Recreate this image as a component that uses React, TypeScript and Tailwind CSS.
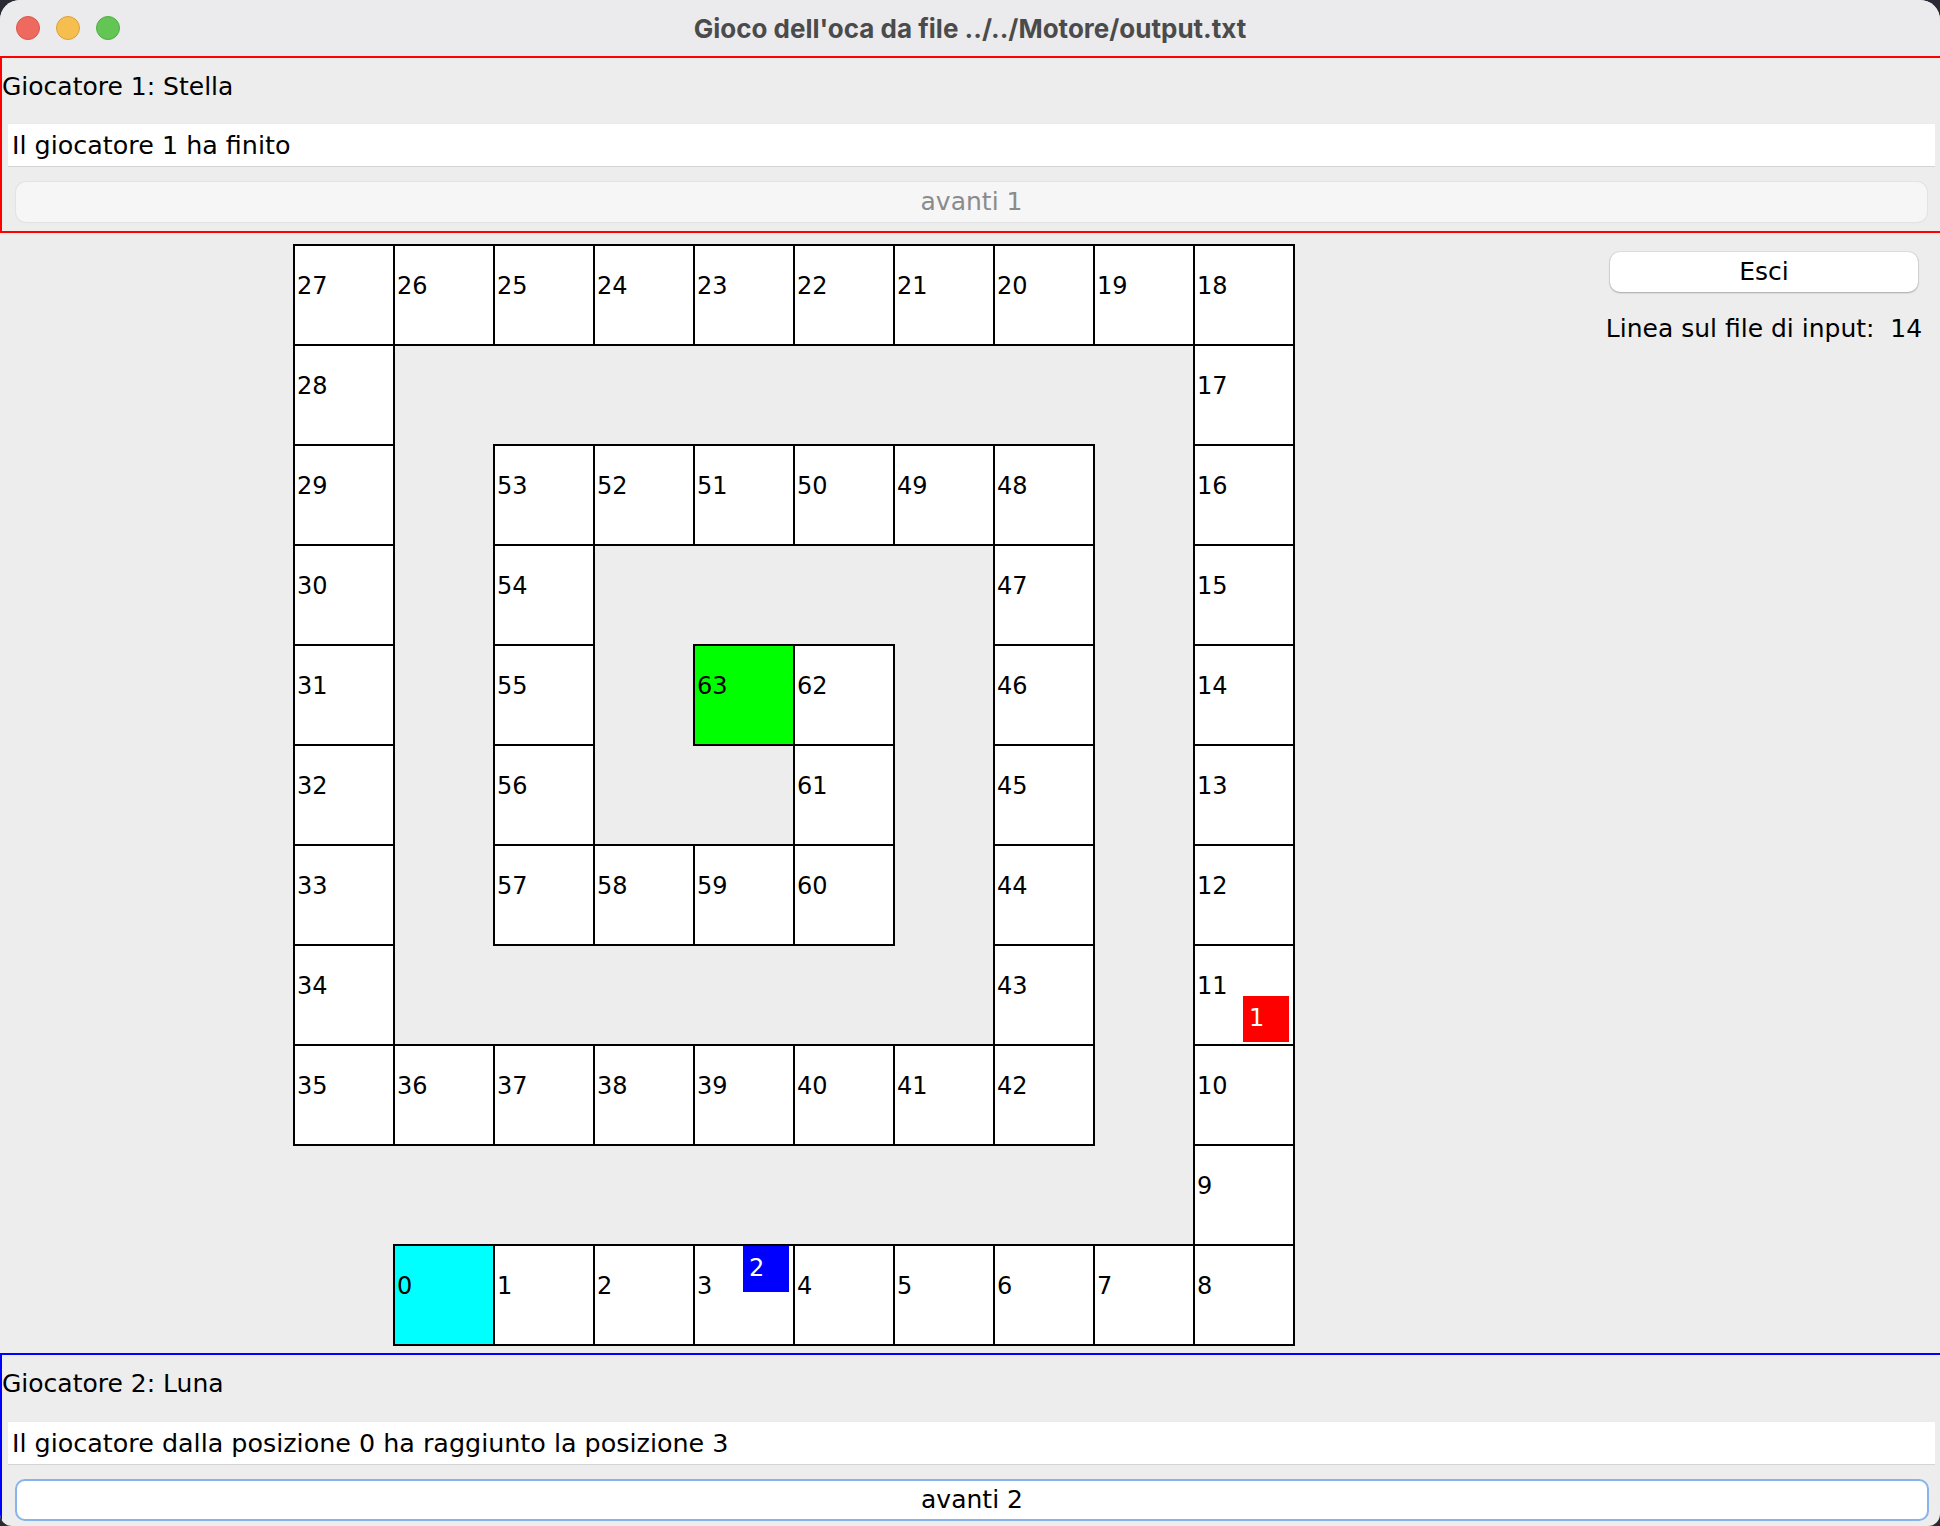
import React from 'react';

type Cell = number | null;
const _ = null;

// tabellone a spirale, 11 righe x 10 colonne
const board: Cell[][] = [
    [27, 26, 25, 24, 23, 22, 21, 20, 19, 18],
    [28, _, _, _, _, _, _, _, _, 17],
    [29, _, 53, 52, 51, 50, 49, 48, _, 16],
    [30, _, 54, _, _, _, _, 47, _, 15],
    [31, _, 55, _, 63, 62, _, 46, _, 14],
    [32, _, 56, _, _, 61, _, 45, _, 13],
    [33, _, 57, 58, 59, 60, _, 44, _, 12],
    [34, _, _, _, _, _, _, 43, _, 11],
    [35, 36, 37, 38, 39, 40, 41, 42, _, 10],
    [_, _, _, _, _, _, _, _, _, 9],
    [_, 0, 1, 2, 3, 4, 5, 6, 7, 8],
];

const sans = "font-['DejaVu_Sans',sans-serif]";

const Token: React.FC<{ n: number; color: string; pos: string }> = ({ n, color, pos }) => (
    <div className={`absolute w-[46px] h-[46px] ${pos} ${color} text-white text-[24px] leading-none pt-[10px] pl-[6px]`}>
        {n}
    </div>
);

const Square: React.FC<{ n: number }> = ({ n }) => {
    const bg = n === 0 ? 'bg-[#00ffff]' : n === 63 ? 'bg-[#00ff00]' : 'bg-white';
    return (
        <div className={`relative w-[102px] h-[102px] border-2 border-black ${bg} text-black text-[24px] leading-none pt-[28px] pl-[2px]`}>
            {n}
            {n === 11 && <Token n={1} color="bg-[#ff0000]" pos="left-[48px] top-[50px]" />}
            {n === 3 && <Token n={2} color="bg-[#0000ff]" pos="left-[48px] top-[0px]" />}
        </div>
    );
};

const PlayerPanel: React.FC<{ label: string; message: string; button: string; active: boolean; border: string }> = ({ label, message, button, active, border }) => (
    <div className={`flex flex-col border-l-2 border-t-2 ${border} ${active ? 'flex-1' : 'border-b-2 pb-[9px]'}`}>
        <div className="h-[58px] leading-[58px] text-[25px] text-black">{label}</div>
        <div className={`ml-[6px] mr-[5px] h-[42px] leading-[42px] pl-[4px] bg-white text-[25.4px] text-black shadow-[0_1px_0_#d4d4d4,0_-1px_0_#ebebeb] ${active ? 'mt-[9px]' : 'mt-[8px]'}`}>
            {message}
        </div>
        {active ? (
            <button className="mt-[15px] ml-[13px] mr-[11px] h-[42px] rounded-[10px] border-2 border-[#86b4ea] bg-white text-[25px] text-black">
                {button}
            </button>
        ) : (
            <button disabled className="mt-[16px] ml-[14px] mr-[13px] h-[40px] rounded-[10px] bg-[#f6f6f6] text-[25px] text-[#8b8b8b] shadow-[0_0_0_1px_#e3e3e3,0_1px_1px_rgba(0,0,0,0.08)]">
                {button}
            </button>
        )}
    </div>
);

export default function App() {
    return (
        <div className={`w-[1940px] h-[1526px] overflow-hidden bg-[#2a2a34] ${sans}`}>
            <div className="flex flex-col h-full rounded-t-[20px] rounded-b-[12px] overflow-hidden bg-[#ededed]">
                {/* barra del titolo */}
                <div className="grid grid-cols-[1fr_auto_1fr] items-center h-[56px] shrink-0 bg-[#ebebed]">
                    <div className="flex items-center gap-[16px] pl-[16px]">
                        <span className="w-[24px] h-[24px] rounded-full bg-[#ee6a5f] border border-[#d9564b]" />
                        <span className="w-[24px] h-[24px] rounded-full bg-[#f5be4f] border border-[#dca13a]" />
                        <span className="w-[24px] h-[24px] rounded-full bg-[#62c554] border border-[#4fae41]" />
                    </div>
                    <div className="font-['Inter',sans-serif] font-bold text-[26px] text-[#4b4b4b]">
                        Gioco dell'oca da file ../../Motore/output.txt
                    </div>
                    <div />
                </div>

                <PlayerPanel
                    label="Giocatore 1: Stella"
                    message="Il giocatore 1 ha finito"
                    button="avanti 1"
                    active={false}
                    border="border-[#ff0000]"
                />

                <div className="flex h-[1120px] shrink-0">
                    <div className="w-[1588px] flex justify-center pt-[11px]">
                        <div className="grid grid-cols-[repeat(10,100px)] grid-rows-[repeat(11,100px)] w-[1002px] h-[1102px]">
                            {board.flat().map((n, i) =>
                                n === null ? <div key={i} /> : <Square key={i} n={n} />
                            )}
                        </div>
                    </div>
                    <div className="w-[352px] flex flex-col items-center pt-[19px]">
                        <button className="w-[308px] h-[40px] rounded-[10px] bg-white text-[25px] text-black shadow-[0_0_0_1px_rgba(0,0,0,0.06),0_1px_2px_rgba(0,0,0,0.25)]">
                            Esci
                        </button>
                        <div className="mt-[17px] h-[40px] leading-[40px] text-[25px] text-black whitespace-pre">
                            Linea sul file di input:  14
                        </div>
                    </div>
                </div>

                <PlayerPanel
                    label="Giocatore 2: Luna"
                    message="Il giocatore dalla posizione 0 ha raggiunto la posizione 3"
                    button="avanti 2"
                    active={true}
                    border="border-[#0000ff]"
                />
            </div>
        </div>
    );
}
